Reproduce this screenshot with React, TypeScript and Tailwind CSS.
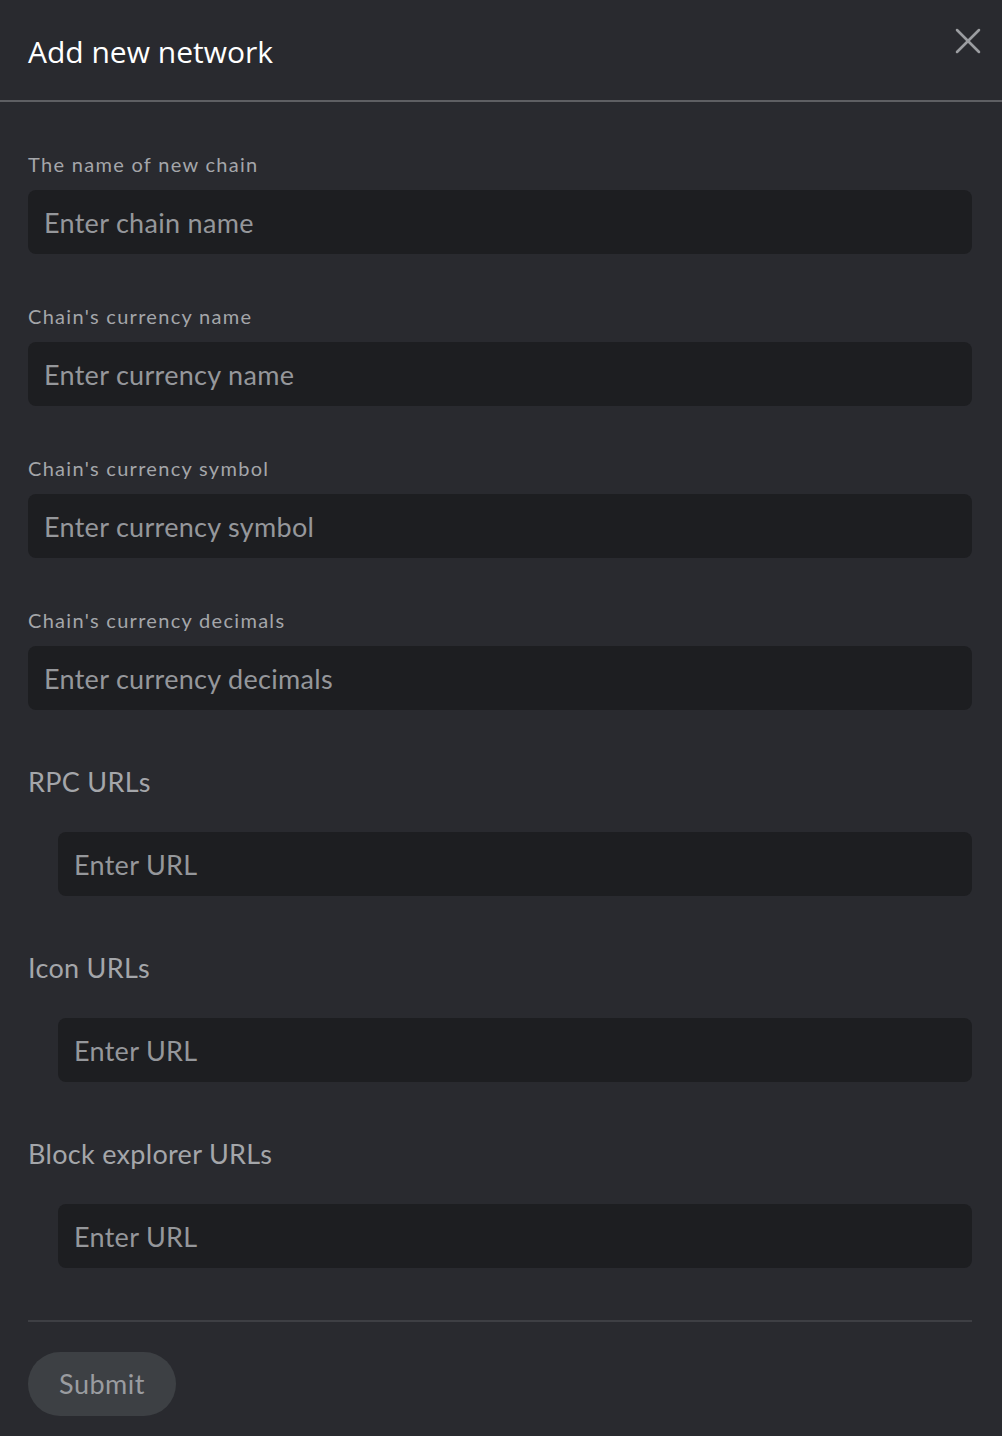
import { X } from "lucide-react";

const fields = [
  { label: "The name of new chain", placeholder: "Enter chain name" },
  { label: "Chain's currency name", placeholder: "Enter currency name" },
  { label: "Chain's currency symbol", placeholder: "Enter currency symbol" },
  { label: "Chain's currency decimals", placeholder: "Enter currency decimals" },
];

const urlGroups = ["RPC URLs", "Icon URLs", "Block explorer URLs"];

const inputCls =
  "h-[64px] w-full rounded-[8px] bg-[#1d1e21] px-[16px] text-[27px] tracking-[0.3px] text-[#cfd0d3] outline-none placeholder:text-[#95979b]";

export default function App() {
  return (
    <div className="min-h-[1436px] w-full bg-[#292a2f] text-[#f2f2f3]" style={{ fontFamily: "Lato, 'Open Sans', sans-serif" }}>
      {/* Header */}
      <div className="relative flex h-[102px] items-center border-b-2 border-[#5e5f63] px-[28px]">
        <h1 className="pt-[4px] text-[30px] font-normal leading-none text-white" style={{ fontFamily: "'Open Sans', sans-serif" }}>
          Add new network
        </h1>
        <button className="absolute right-[12px] top-[19px] text-[#9b9da1]">
          <X className="h-[44px] w-[44px]" strokeWidth={1.4} />
        </button>
      </div>

      <div className="pl-[28px] pr-[30px] pt-[50px]">
        {fields.map((f) => (
          <div key={f.label} className="mb-[50px]">
            <label className="mb-[14px] block text-[20px] leading-[24px] tracking-[1.3px] text-[#a4a6aa]">{f.label}</label>
            <input placeholder={f.placeholder} className={inputCls} />
          </div>
        ))}

        <div className="pt-[6px]">
          {urlGroups.map((g) => (
            <div key={g} className="mb-[56px] last:mb-0">
              <div className="mb-[34px] text-[27px] leading-[32px] tracking-[0.3px] text-[#a4a6aa]">{g}</div>
              <div className="pl-[30px]">
                <input placeholder="Enter URL" className={inputCls} />
              </div>
            </div>
          ))}
        </div>

        <div className="mt-[52px] h-[2px] bg-[#3e3f44]" />

        <div className="pb-[20px] pt-[30px]">
          <button className="h-[64px] rounded-full bg-[#3d4044] px-[31px] text-[27px] tracking-[0.5px] text-[#9a9ca0]">Submit</button>
        </div>
      </div>
    </div>
  );
}
